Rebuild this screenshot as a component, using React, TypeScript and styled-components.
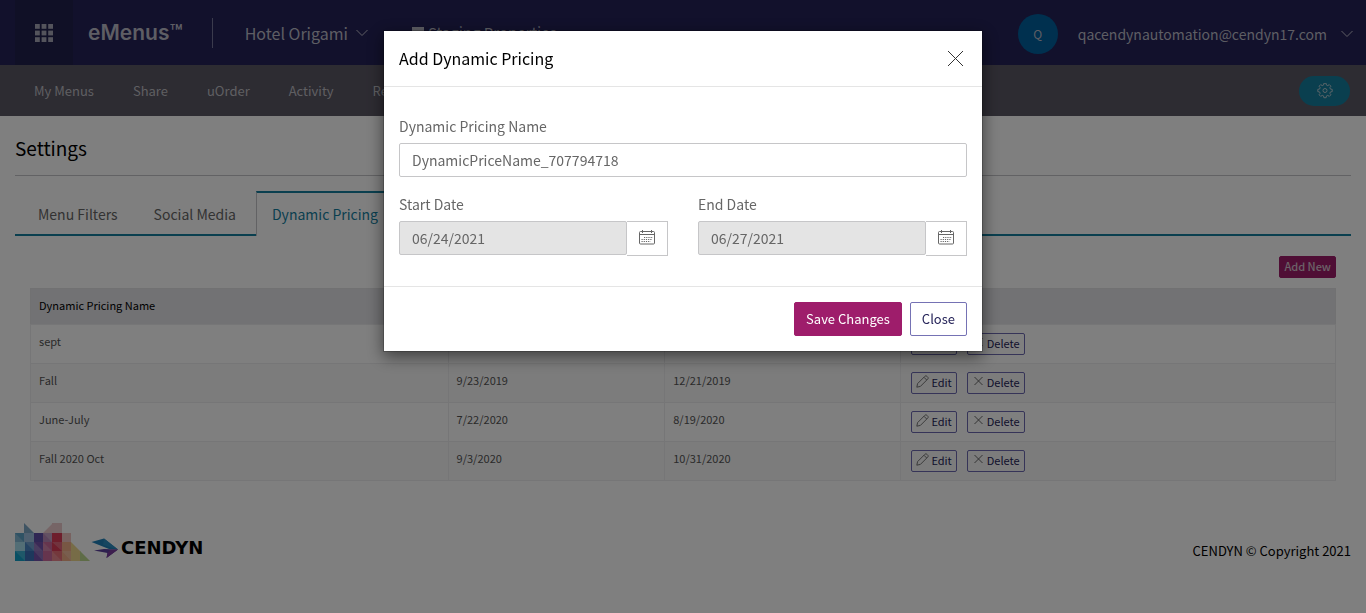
import React from 'react';
import styled, { createGlobalStyle } from 'styled-components';

const teal = '#157f9f';
const magenta = '#9e1d6b';
const navy = '#242258';

const GlobalStyle = createGlobalStyle`
  * { box-sizing: border-box; }
  body {
    margin: 0;
    background: #fff;
    color: #000;
    font-family: "Noto Sans CJK SC", "Noto Sans", sans-serif;
    font-size: 14px;
    line-height: 20px;
  }
  button, input { font-family: inherit; }
  a { color: inherit; text-decoration: none; }
`;

const TopBar = styled.header`
  display: flex;
  align-items: center;
  height: 65px;
  padding: 0 13px 0 15px;
  background: ${navy};
  color: #bcbcc8;
`;

const AppsButton = styled.button`
  display: flex;
  align-items: center;
  justify-content: center;
  width: 58px;
  height: 65px;
  border: 0;
  background: #20204c;
  color: #a8a8b8;
`;

const Brand = styled.a`
  margin-left: 15px;
  padding-right: 29px;
  border-right: 1px solid #77769a;
  font-family: Inter, sans-serif;
  font-weight: 600;
  font-size: 21px;
  line-height: 30px;
`;

const PropertyMenu = styled.button`
  display: flex;
  align-items: center;
  gap: 8px;
  margin-left: 32px;
  padding: 0;
  border: 0;
  background: none;
  color: inherit;
  font-size: 16px;
  line-height: 24px;
`;

const StagingOption = styled.label`
  display: flex;
  align-items: center;
  gap: 4px;
  margin-left: 44px;
  font-size: 15px;
  input {
    appearance: none;
    width: 12px;
    height: 12px;
    margin: 0;
    background: #bcbcc8;
  }
`;

const Account = styled.button`
  display: flex;
  align-items: center;
  margin-left: auto;
  padding: 2px 0 0;
  border: 0;
  background: none;
  color: inherit;
  font-size: 14px;
  line-height: 20px;
`;

const Avatar = styled.span`
  width: 40px;
  height: 40px;
  margin-right: 20px;
  border-radius: 50%;
  background: #00609e;
  font-size: 12px;
  line-height: 40px;
  text-align: center;
`;

const AccountName = styled.span`
  margin-right: 14px;
`;

const NavBar = styled.nav`
  display: flex;
  align-items: center;
  gap: 39px;
  height: 51px;
  padding: 0 16px 0 34px;
  background: #5b5865;
  color: #bfbfc4;
  font-size: 13px;
`;

const SettingsButton = styled.button`
  display: flex;
  align-items: center;
  justify-content: center;
  width: 51px;
  height: 30px;
  margin-left: auto;
  border: 0;
  border-radius: 15px;
  background: ${teal};
  color: #b4c8d0;
`;

const Page = styled.main`
  padding: 0 15px;
`;

const PageTitle = styled.h1`
  margin: 0;
  padding: 17px 0 13px;
  border-bottom: 1px solid #c4c4c8;
  font-size: 19px;
  font-weight: 400;
  line-height: 29px;
`;

const Tabs = styled.div`
  display: flex;
  margin-top: 15px;
  padding-left: 7px;
  background: linear-gradient(${teal}, ${teal}) bottom / 100% 2px no-repeat;
`;

const Tab = styled.a<{ $active?: boolean }>`
  height: 45px;
  padding: 11px 15px 0;
  margin-right: 4px;
  border: solid ${(p) => (p.$active ? teal : 'transparent')};
  border-width: 2px 1px 0;
  border-left-color: ${(p) => (p.$active ? '#c4c4c8' : 'transparent')};
  background: ${(p) => (p.$active ? '#fff' : 'none')};
  color: ${(p) => (p.$active ? teal : '#666')};
  & + &:last-child { margin-left: -3px; }
`;

const Panel = styled.section`
  padding: 20px 15px 0;
`;

const PanelActions = styled.div`
  display: flex;
  justify-content: flex-end;
  margin-bottom: 10px;
`;

const SmallButton = styled.button<{ $primary?: boolean }>`
  display: inline-flex;
  align-items: center;
  gap: 2px;
  height: 22px;
  padding: 0 4px 2px;
  border: 1px solid ${(p) => (p.$primary ? magenta : '#6c69b0')};
  border-radius: 2px;
  background: ${(p) => (p.$primary ? magenta : 'transparent')};
  color: ${(p) => (p.$primary ? '#d8c4d0' : navy)};
  font-size: 11px;
  font-weight: ${(p) => (p.$primary ? 500 : 400)};
  line-height: 16px;
  svg { color: #555; }
`;

const PriceTable = styled.table`
  width: 100%;
  table-layout: fixed;
  border-collapse: collapse;
  border: 1px solid #e2e2e4;
  font-size: 11px;
  line-height: 16px;
  th {
    height: 36px;
    padding: 0 8px 4px;
    background: #e4e4e8;
    font-weight: 400;
    text-align: left;
  }
  td {
    height: 39px;
    padding: 0 8px 6px;
    border: 1px solid #ececee;
    color: #555;
  }
  tbody tr:nth-child(even) { background: #f9f9f9; }
`;

const RowActions = styled.div`
  display: flex;
  gap: 10px;
  padding: 5px 0 0 2px;
`;

const Footer = styled.footer`
  display: flex;
  align-items: center;
  justify-content: space-between;
  padding: 42px 15px 0;
  font-size: 13px;
`;

const FooterLogo = styled.a`
  display: flex;
  align-items: center;
  height: 38px;
`;

const LogoWord = styled.span`
  margin: 12px 0 0 3px;
  font-family: "DejaVu Sans", sans-serif;
  font-size: 18px;
  font-weight: 700;
`;

const Copyright = styled.span`
  margin-top: 18px;
`;

const Backdrop = styled.div`
  position: fixed;
  inset: 0;
  overflow: auto;
  padding: 30px 10px;
  background: rgba(0, 0, 0, 0.5);
`;

const Dialog = styled.div`
  max-width: 600px;
  margin: 0 auto;
  border: 1px solid rgba(0, 0, 0, 0.2);
  background: #fff;
  background-clip: padding-box;
  box-shadow: 0 5px 15px rgba(0, 0, 0, 0.5);
`;

const DialogHeader = styled.div`
  display: flex;
  align-items: center;
  justify-content: space-between;
  height: 56px;
  padding: 0 18px 1px 15px;
  border-bottom: 1px solid #e5e5e5;
`;

const DialogTitle = styled.h2`
  margin: 0;
  font-size: 16px;
  font-weight: 400;
  line-height: 24px;
`;

const CloseButton = styled.button`
  display: flex;
  padding: 0;
  border: 0;
  background: none;
  color: #333;
`;

const DialogBody = styled.div`
  padding: 29px 15px 30px;
`;

const Field = styled.div`
  flex: 1;
  min-width: 0;
`;

const FieldLabel = styled.label`
  display: block;
  margin-bottom: 7px;
  color: #666;
`;

const TextInput = styled.input`
  flex: 1;
  width: 100%;
  min-width: 0;
  height: 34px;
  padding: 0 12px;
  border: 1px solid #c6c6c8;
  border-radius: 2px;
  background: #fff;
  color: #666;
  font-size: 14px;
  &:disabled { background: #e4e4e4; }
`;

const DateRow = styled.div`
  display: flex;
  gap: 30px;
  margin-top: 17px;
`;

const DateGroup = styled.div`
  display: flex;
`;

const CalendarButton = styled.button`
  display: flex;
  align-items: center;
  justify-content: center;
  width: 41px;
  height: 35px;
  padding: 0 0 2px;
  border: 1px solid #c6c6c8;
  border-left: 0;
  background: #fff;
  color: #666;
`;

const DialogFooter = styled.div`
  display: flex;
  justify-content: flex-end;
  gap: 8px;
  padding: 15px;
  border-top: 1px solid #e5e5e5;
`;

const DialogButton = styled.button<{ $primary?: boolean }>`
  height: 34px;
  padding: 0 11px;
  border: 1px solid ${(p) => (p.$primary ? magenta : '#7572b4')};
  border-radius: 2px;
  background: ${(p) => (p.$primary ? magenta : '#fff')};
  color: ${(p) => (p.$primary ? '#fff' : navy)};
  font-size: 13px;
  line-height: 20px;
`;

const GridIcon = () => (
  <svg width="18" height="18" viewBox="0 0 18 18" fill="currentColor">
    {[0, 1, 2].map((r) => [0, 1, 2].map((c) => (
      <rect key={`${r}${c}`} x={c * 6.6} y={r * 6.6} width="4.8" height="4.8" />
    )))}
  </svg>
);

const Chevron = () => (
  <svg width="12" height="8" viewBox="0 0 12 8" fill="none" stroke="currentColor">
    <path d="M.5 1 6 6.5 11.5 1" />
  </svg>
);

const Cross = () => (
  <svg width="17" height="17" viewBox="0 0 17 17" fill="none" stroke="currentColor">
    <path d="M1 1l15 15M16 1L1 16" />
  </svg>
);

const SmallCross = () => (
  <svg width="13" height="13" viewBox="0 0 13 13" fill="none" stroke="currentColor" strokeWidth=".9">
    <path d="M2.500 2l8 8M10.500 2l-8 8" />
  </svg>
);

const Pencil = () => (
  <svg width="13" height="13" viewBox="0 0 13 13" fill="none" stroke="currentColor" strokeWidth=".8">
    <path d="M.8 12.200l.8-3.600L8.800 1.400c.8-.8 1.500-.7 2.100-.1l.8.8c.6.6.7 1.300-.1 2.100L4.400 11.400z M8 2.300l2.700 2.700" />
  </svg>
);

const Gear = () => {
  const pts: string[] = [];
  for (let i = 0; i < 8; i++) {
    [[-15, 5.6], [-9, 7.3], [9, 7.3], [15, 5.6]].forEach(([d, r]) => {
      const a = ((i * 45 + d) * Math.PI) / 180;
      pts.push(`${(8 + r * Math.cos(a)).toFixed(2)},${(7.5 + r * Math.sin(a)).toFixed(2)}`);
    });
  }
  return (
    <svg width="16" height="16" viewBox="0 0 16 16" fill="none" stroke="currentColor" strokeLinejoin="round">
      <polygon points={pts.join(' ')} />
      <circle cx="8" cy="7.5" r="2" />
    </svg>
  );
};

const CalendarIcon = () => (
  <svg width="16" height="15" viewBox="0 0 16 15" fill="none" stroke="currentColor">
    <path d="M.5 2.500q0-1 1-1h13q1 0 1 1v10.500q0 1-1 1h-13q-1 0-1-1z M.5 4.500h15 M3.500 0v3 M12.500 0v3" />
    <path d="M5 7.500h9 M2.500 9.500h11 M2.500 11.500h9" strokeDasharray="1.2 1" />
  </svg>
);

const Mosaic = () => (
  <svg width="75" height="38" viewBox="0 0 75 38">
    <path d="M0 10h9v9H0z" fill="#5fa4c8" />
    <path d="M9 10h10v9H9z" fill="#9fc0e0" />
    <path d="M9 0l10 10H9z" fill="#7fa8c6" />
    <path d="M0 19h10v9H0z" fill="#a6dcec" />
    <path d="M0 28h10v10H0z" fill="#12a0c8" />
    <path d="M10 19h9v9h-9z" fill="#4a86c4" />
    <path d="M10 28h9v10h-9z" fill="#3a70b8" />
    <path d="M19 10h9v9h-9z" fill="#5f4fa8" />
    <path d="M19 19h9v19h-9z" fill="#7552ac" />
    <path d="M28 10h9v9h-9z" fill="#b888b8" />
    <path d="M28 10l9-9v9z M37 0v10h10V0z" fill="#e4b4b8" opacity=".7" />
    <path d="M28 19h9v19h-9z" fill="#cc6a9c" />
    <path d="M37 10h10v18H37z" fill="#dc3c58" />
    <path d="M37 28h10v10H37z" fill="#e87078" />
    <path d="M47 10h9v9h-9z" fill="#f0c4c0" />
    <path d="M47 19h9v19h-9z" fill="#f0ae88" />
    <path d="M56 19l9.500 9.500V38H56z" fill="#efd98e" />
    <path d="M65 28l10 10H65z" fill="#bcd88e" />
    <path d="M0 10l9 9H0z M10 19l9 9v-9z M19 19l9 9h-9z M28 10l9 9v-9z M37 19l10 9v-9z" fill="#fff" opacity=".22" />
    <path d="M0 28l10 10V28z M19 28l9 10v-10z M28 19l9 9h-9z M47 28l9 10v-10z M37 28l10 10H37z" fill="#fff" opacity=".18" />
  </svg>
);

const Bird = styled(({ className }: { className?: string }) => (
  <svg className={className} width="28" height="20" viewBox="0 0 28 20">
    <path d="M1.500 4L14 .5 28 11.500l-9-.5-5-2z" fill="#2080b8" />
    <path d="M14 .5L28 11.500 13 7z" fill="#2c8cc0" />
    <path d="M4 12.500l10-1.500 14 .5L16.500 20l1-5z" fill="#5a409c" />
    <path d="M20 12l8-.5L16.500 20l1-5z" fill="#7a3c9c" />
  </svg>
))`
  margin-top: 12px;
`;

const rows = [
  ['sept', '9/1/2019', '9/30/2019'],
  ['Fall', '9/23/2019', '12/21/2019'],
  ['June-July', '7/22/2020', '8/19/2020'],
  ['Fall 2020 Oct', '9/3/2020', '10/31/2020'],
];

const DateField = ({ id, label, value }: { id: string; label: string; value: string }) => (
  <Field>
    <FieldLabel htmlFor={id}>{label}</FieldLabel>
    <DateGroup>
      <TextInput id={id} defaultValue={value} disabled />
      <CalendarButton type="button" aria-label={`Choose ${label}`}><CalendarIcon /></CalendarButton>
    </DateGroup>
  </Field>
);

const Col = styled.col<{ $width?: string }>`
  width: ${(p) => p.$width || 'auto'};
`;

export default function App() {
  return (
    <>
      <GlobalStyle />
      <TopBar>
        <AppsButton aria-label="Applications"><GridIcon /></AppsButton>
        <Brand href="#">eMenus™</Brand>
        <PropertyMenu>Hotel Origami <Chevron /></PropertyMenu>
        <StagingOption><input type="checkbox" />Staging Properties</StagingOption>
        <Account>
          <Avatar>Q</Avatar>
          <AccountName>qacendynautomation@cendyn17.com</AccountName>
          <Chevron />
        </Account>
      </TopBar>
      <NavBar>
        <a href="#">My Menus</a>
        <a href="#">Share</a>
        <a href="#">uOrder</a>
        <a href="#">Activity</a>
        <a href="#">Reports</a>
        <SettingsButton aria-label="Settings"><Gear /></SettingsButton>
      </NavBar>
      <Page>
        <PageTitle>Settings</PageTitle>
        <Tabs>
          <Tab href="#">Menu Filters</Tab>
          <Tab href="#">Social Media</Tab>
          <Tab href="#" $active>Dynamic Pricing</Tab>
        </Tabs>
        <Panel>
          <PanelActions><SmallButton $primary>Add New</SmallButton></PanelActions>
          <PriceTable>
            <colgroup>
              <Col $width="32%" />
              <Col $width="16.6%" />
              <Col $width="18.1%" />
              <Col />
            </colgroup>
            <thead>
              <tr><th>Dynamic Pricing Name</th><th>Start Date</th><th>End Date</th><th aria-label="Actions" /></tr>
            </thead>
            <tbody>
              {rows.map(([name, start, end]) => (
                <tr key={name}>
                  <td>{name}</td>
                  <td>{start}</td>
                  <td>{end}</td>
                  <td>
                    <RowActions>
                      <SmallButton><Pencil />Edit</SmallButton>
                      <SmallButton><SmallCross />Delete</SmallButton>
                    </RowActions>
                  </td>
                </tr>
              ))}
            </tbody>
          </PriceTable>
        </Panel>
      </Page>
      <Footer>
        <FooterLogo href="#" aria-label="Cendyn"><Mosaic /><Bird /><LogoWord>CENDYN</LogoWord></FooterLogo>
        <Copyright>CENDYN © Copyright 2021</Copyright>
      </Footer>
      <Backdrop>
        <Dialog role="dialog" aria-labelledby="dialog-title">
          <DialogHeader>
            <DialogTitle id="dialog-title">Add Dynamic Pricing</DialogTitle>
            <CloseButton aria-label="Close dialog"><Cross /></CloseButton>
          </DialogHeader>
          <DialogBody>
            <Field>
              <FieldLabel htmlFor="name">Dynamic Pricing Name</FieldLabel>
              <TextInput id="name" defaultValue="DynamicPriceName_707794718" />
            </Field>
            <DateRow>
              <DateField id="start" label="Start Date" value="06/24/2021" />
              <DateField id="end" label="End Date" value="06/27/2021" />
            </DateRow>
          </DialogBody>
          <DialogFooter>
            <DialogButton $primary>Save Changes</DialogButton>
            <DialogButton>Close</DialogButton>
          </DialogFooter>
        </Dialog>
      </Backdrop>
    </>
  );
}
